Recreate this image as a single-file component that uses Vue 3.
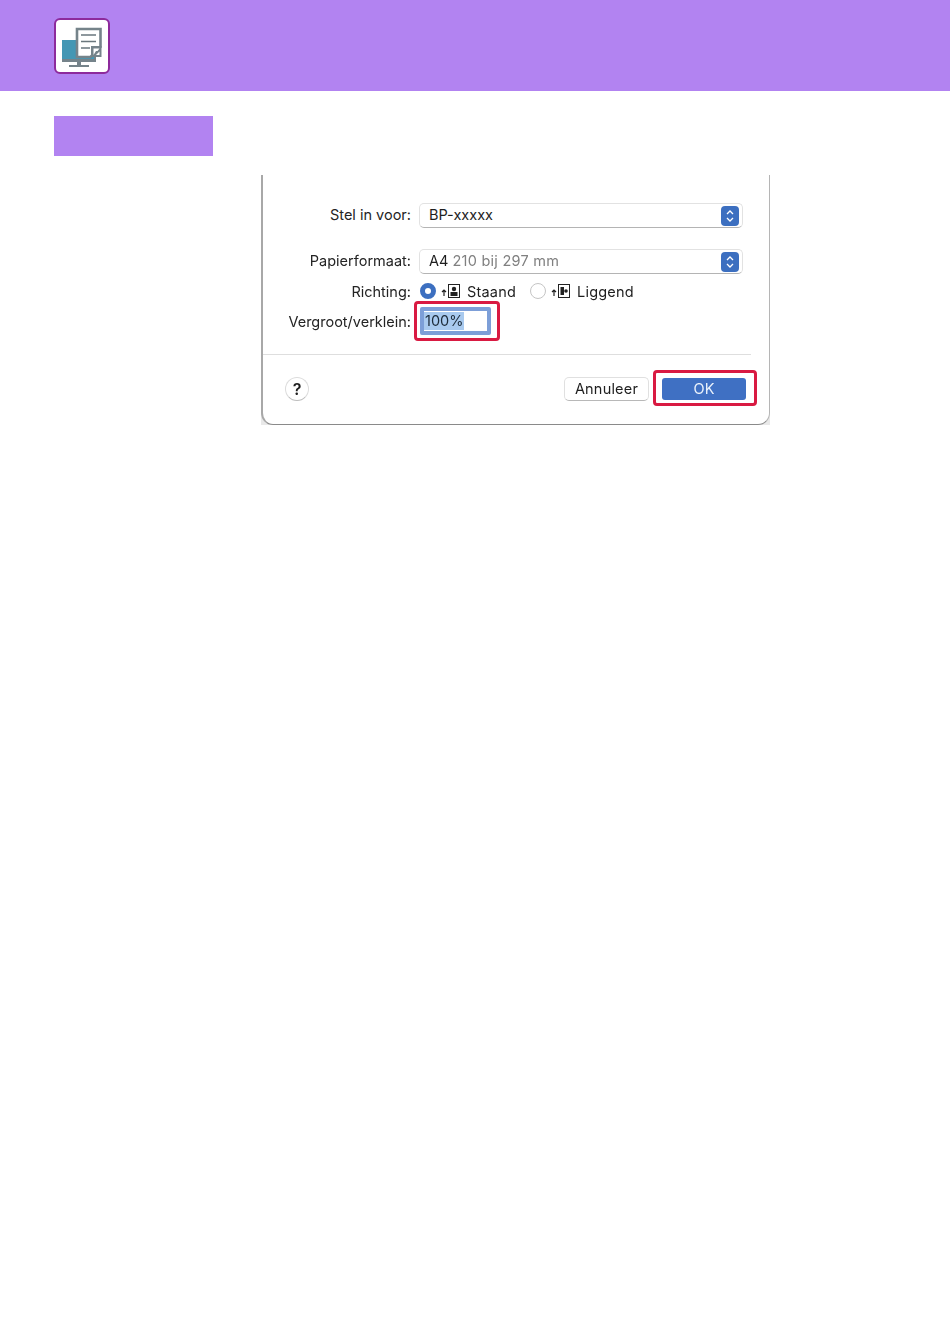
<template>
  <div class="page">
    <header class="top">
      <div class="logo">
        <!-- monitor + document -->
        <svg width="52" height="52" viewBox="0 0 52 52">
          <rect x="6" y="20" width="34" height="22" fill="#75838a" />
          <rect x="6" y="20" width="32" height="19" fill="#4497b4" />
          <rect x="21" y="42" width="4" height="3" fill="#75838a" />
          <rect x="13" y="45" width="20" height="2" fill="#75838a" />
          <path d="M21 9h23.500v18l-10 10h-13.500z" fill="#fff" stroke="#75838a" stroke-width="2.600" />
          <path d="M25 15h15M25 21.500h15M25 28h9" stroke="#6a777d" stroke-width="1.700" fill="none" />
          <path d="M35 26h10.500v11h-10.500z" fill="#75838a" />
          <path d="M37.500 35v-6.500h6l-2 2.500h-1.500l-2.500 4z" fill="#fff" />
          <path d="M40 35l3.500-3.500v3.500z" fill="#fff" />
        </svg>
      </div>
    </header>

    <div class="section-bar"></div>

    <div class="shot">
      <div class="dialog">
        <div class="row row-first">
          <span class="label lift">Stel in voor:</span>
          <div class="select">
            <span class="lift">BP-xxxxx</span>
            <span class="stepper">
              <svg width="10" height="14" viewBox="0 0 10 14"><path d="M2 5l3-3 3 3M2 9l3 3 3-3" stroke="#fff" stroke-width="1.300" fill="none" /></svg>
            </span>
          </div>
        </div>
        <div class="row row-paper">
          <span class="label lift">Papierformaat:</span>
          <div class="select">
            <span class="lift">A4 <em>210 bij 297 mm</em></span>
            <span class="stepper">
              <svg width="10" height="14" viewBox="0 0 10 14"><path d="M2 5l3-3 3 3M2 9l3 3 3-3" stroke="#fff" stroke-width="1.300" fill="none" /></svg>
            </span>
          </div>
        </div>
        <div class="row row-dir">
          <span class="label">Richting:</span>
          <div class="radios">
            <span class="radio on"></span>
            <svg class="dir-icon" width="20" height="16" viewBox="0 0 20 16">
              <path d="M3 13V7M1 9l2-2 2 2" stroke="#222" stroke-width="1.200" fill="none" />
              <rect x="7.500" y="1.500" width="11" height="13" fill="#fff" stroke="#222" />
              <circle cx="13" cy="6" r="2.200" fill="#222" />
              <rect x="9.500" y="9" width="7" height="4" fill="#222" />
            </svg>
            <span class="opt">Staand</span>
            <span class="radio"></span>
            <svg class="dir-icon" width="20" height="16" viewBox="0 0 20 16">
              <path d="M3 13V7M1 9l2-2 2 2" stroke="#222" stroke-width="1.200" fill="none" />
              <rect x="7.500" y="1.500" width="11" height="13" fill="#fff" stroke="#222" />
              <rect x="9.500" y="4" width="3.500" height="8" fill="#222" />
              <circle cx="15" cy="8" r="1.800" fill="#222" />
            </svg>
            <span class="opt">Liggend</span>
          </div>
        </div>
        <div class="row row-scale">
          <span class="label">Vergroot/verklein:</span>
          <div class="field">
            <span class="sel">100%</span>
            <span class="mark mark-field"></span>
          </div>
        </div>
        <div class="sep"></div>
        <div class="footer">
          <span class="help">?</span>
          <div class="buttons">
            <span class="btn">Annuleer</span>
            <span class="btn primary">OK<span class="mark mark-ok"></span></span>
          </div>
        </div>
      </div>
    </div>
  </div>
</template>

<script setup>
</script>

<style>
html,
body {
  margin: 0;
  background: #fff;
}
</style>

<style scoped>
.page {
  width: 950px;
  height: 1344px;
  overflow: hidden;
  background: #fff;
  font-family: Inter, "Liberation Sans", sans-serif;
}
.top {
  height: 91px;
  box-sizing: border-box;
  padding: 18px 0 0 54px;
  background: #b283f1;
}
.logo {
  width: 56px;
  height: 56px;
  box-sizing: border-box;
  border: 2px solid #8d2a9c;
  border-radius: 6px;
  background: #fff;
}
.logo svg {
  display: block;
  filter: blur(0.3px);
}
.section-bar {
  width: 159px;
  height: 40px;
  margin: 25px 0 0 54px;
  background: #b283f1;
}
.shot {
  width: 509px;
  height: 250px;
  margin: 19px 0 0 261px;
  background: #e9e9e9;
}
.dialog {
  height: 250px;
  box-sizing: border-box;
  padding-top: 28px;
  background: #fff;
  border-left: 2px solid #a8a8a8;
  border-right: 1px solid #b5b5b5;
  border-bottom: 1px solid #8a8a8a;
  border-radius: 0 0 12px 12px;
  color: #1e1e1e;
  font-size: 14.500px;
  filter: blur(0.3px);
}
.row {
  display: flex;
  align-items: center;
}
.label {
  width: 148px;
  flex: none;
  text-align: right;
  margin-right: 8px;
  color: #242424;
}
.lift {
  margin-bottom: 2px;
}
.select {
  width: 324px;
  height: 25px;
  box-sizing: border-box;
  display: flex;
  align-items: center;
  justify-content: space-between;
  padding: 0 3px 0 9px;
  border: 1px solid #e2e2e2;
  border-bottom: 1px solid #b4b4b4;
  border-radius: 5px;
  background: #fff;
}
.select em {
  font-style: normal;
  color: #808080;
  letter-spacing: 0.25px;
}
.stepper {
  width: 18px;
  height: 20px;
  display: flex;
  align-items: center;
  justify-content: center;
  border-radius: 4px;
  background: #3c6fc0;
}
.row-paper {
  margin-top: 21px;
}
.row-dir {
  margin-top: 8px;
  height: 18px;
}
.radios {
  display: flex;
  align-items: center;
  margin-left: 1px;
}
.radio {
  width: 16px;
  height: 16px;
  box-sizing: border-box;
  border: 1px solid #c4c4c4;
  border-radius: 50%;
  background: #fff;
}
.radio.on {
  border: 5.500px solid #3c6fc0;
}
.dir-icon {
  margin-left: 5px;
}
.opt {
  margin: 0 14px 0 6px;
  letter-spacing: 0.2px;
}
.row-scale {
  margin-top: 7px;
}
.field {
  position: relative;
  width: 71px;
  height: 28px;
  margin-left: 1px;
  box-sizing: border-box;
  display: flex;
  align-items: center;
  border: 4px solid #7d9fd8;
  border-radius: 2px;
  background: #fff;
}
.sel {
  padding: 0 1px;
  line-height: 18px;
  background: #a9caef;
  color: #1c2b3a;
}
.mark {
  position: absolute;
  box-sizing: border-box;
  border: 3px solid #d91a42;
  border-radius: 4px;
}
.mark-field {
  left: -10px;
  top: -10px;
  width: 86px;
  height: 40px;
}
.mark-ok {
  left: -9px;
  top: -8px;
  width: 104px;
  height: 36px;
}
.sep {
  width: 488px;
  margin-top: 19px;
  border-top: 1px solid #dedede;
}
.footer {
  display: flex;
  align-items: center;
  justify-content: space-between;
  height: 24px;
  margin-top: 22px;
  padding: 0 23px 0 22px;
}
.help {
  width: 24px;
  height: 24px;
  box-sizing: border-box;
  display: flex;
  align-items: center;
  justify-content: center;
  border: 1px solid #dcdcdc;
  border-bottom-color: #bdbdbd;
  border-radius: 50%;
  font-size: 16px;
  font-weight: 600;
}
.buttons {
  display: flex;
  align-items: center;
  gap: 13px;
}
.btn {
  width: 85px;
  height: 24px;
  box-sizing: border-box;
  padding-bottom: 2px;
  display: flex;
  align-items: center;
  justify-content: center;
  border: 1px solid #e0e0e0;
  border-bottom-color: #b8b8b8;
  border-radius: 5px;
  background: #fff;
  letter-spacing: 0.2px;
}
.btn.primary {
  position: relative;
  width: 84px;
  height: 22px;
  border: 0;
  border-radius: 3px;
  background: #3f70c3;
  color: #e9f1fb;
}
</style>
